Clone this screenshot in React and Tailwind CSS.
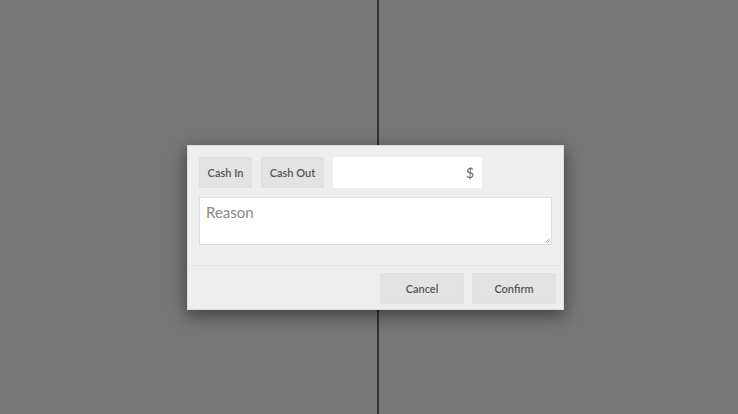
export default function App() {
  return (
    <div className="relative w-[738px] h-[414px] bg-[#777777] overflow-hidden" style={{ fontFamily: "Lato, 'Open Sans', sans-serif" }}>
      <div className="flex h-full">
        <div className="w-[377px] h-full"></div>
        <div className="w-[2px] h-full bg-[#333333]"></div>
        <div className="flex-1 h-full"></div>
      </div>
      <div className="absolute left-[187px] top-[145px] w-[377px] h-[165px] bg-[#eeeeee] border border-[#dddddd] shadow-[0_5px_16px_rgba(0,0,0,0.5)] flex flex-col">
        <div className="px-[11px] pt-[11px]">
          <div className="flex gap-[9px] h-[31px]">
            <button className="w-[53px] pt-[1px] bg-[#e3e3e3] border border-[#e0e0e0] text-[11px] font-semibold text-[#555555]">Cash In</button>
            <button className="w-[63px] pt-[1px] bg-[#e3e3e3] border border-[#e0e0e0] text-[11px] font-semibold text-[#555555]">Cash Out</button>
            <div className="w-[149px] bg-white rounded-[2px] flex items-center justify-end pr-[8px] text-[14px] text-[#666666]">$</div>
          </div>
          <div className="relative mt-[9px] h-[48px] bg-white border border-[#dddddd] px-[6px] pt-[3px] text-[15px] text-[#888888]">
            Reason
            <svg className="absolute right-[1px] bottom-[1px]" width="5" height="5" viewBox="0 0 5 5">
              <path d="M4.5 0.5 L0.5 4.5 M4.5 2.5 L2.5 4.5" stroke="#999" strokeWidth="0.8" />
            </svg>
          </div>
        </div>
        <div className="mt-[20px] border-t border-[#e6e6e6] flex justify-end gap-[8px] px-[7px] pt-[7px]">
          <button className="w-[84px] h-[31px] pt-[1px] bg-[#e3e3e3] border border-[#e0e0e0] text-[11px] font-semibold text-[#555555]">Cancel</button>
          <button className="w-[84px] h-[31px] pt-[1px] bg-[#e3e3e3] border border-[#e0e0e0] text-[11px] font-semibold text-[#555555]">Confirm</button>
        </div>
      </div>
    </div>
  );
}
